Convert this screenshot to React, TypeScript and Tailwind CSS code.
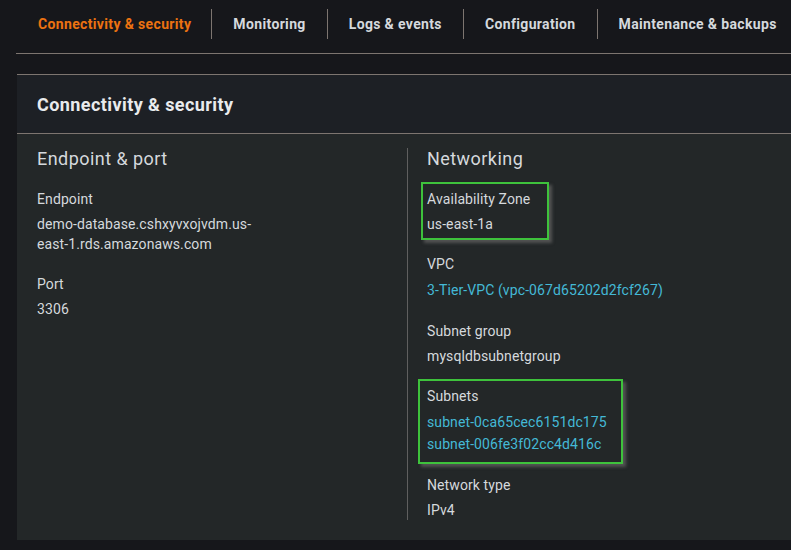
const tabs = ["Connectivity & security", "Monitoring", "Logs & events", "Configuration", "Maintenance & backups"];

function Label({ children }: { children: React.ReactNode }) {
  return <div className="text-[14px] leading-[20px] tracking-[0.1px] text-[#d5d9dd]">{children}</div>;
}

function Value({ children }: { children: React.ReactNode }) {
  return <div className="mt-[5px] text-[14px] leading-[20px] tracking-[0.1px] text-[#d5d9dd]">{children}</div>;
}

function Link({ children }: { children: React.ReactNode }) {
  return <div className="text-[14px] leading-[22px] tracking-[0.1px] text-[#44b9d6]">{children}</div>;
}

function Highlight({ className }: { className: string }) {
  return (
    <div
      className={`absolute border-2 border-[#3ec23c] shadow-[3px_3px_3px_rgba(90,90,90,0.85)] pointer-events-none ${className}`}
    />
  );
}

export default function App() {
  return (
    <div
      className="w-[791px] h-[550px] overflow-hidden bg-[#16171b]"
      style={{ fontFamily: "Roboto, 'Open Sans', sans-serif" }}
    >
      {/* tabs */}
      <div className="ml-[16px] h-[54px] border-b border-[#7d7570] flex items-start pt-[9px] pl-[22px]">
        {tabs.map((t, i) => (
          <div
            key={t}
            className={`h-[30px] flex items-center text-[14px] font-bold tracking-[0.35px] whitespace-nowrap ${
              i === 0 ? "pr-[20px] text-[#ec7211]" : "px-[21px] border-l border-[#7d7570] text-[#d5d9dd]"
            }`}
          >
            {t}
          </div>
        ))}
      </div>

      {/* panel */}
      <div className="ml-[17px] mt-[20px] border-t border-[#7d7570] bg-[#232728]">
        <div className="h-[59px] bg-[#1d2025] border-b border-[#7d7570] px-[20px] flex items-center">
          <h2 className="text-[18px] font-bold tracking-[0.42px] text-[#e9ebed]">Connectivity &amp; security</h2>
        </div>

        <div className="flex pt-[14px] pb-[20px]">
          {/* endpoint & port */}
          <div className="w-[390px] px-[20px] flex flex-col gap-[20px]">
            <h3 className="text-[18px] leading-[22px] tracking-[0.45px] -mb-[1px] text-[#d5d9dd]">Endpoint &amp; port</h3>
            <div>
              <Label>Endpoint</Label>
              <Value>
                demo-database.cshxyvxojvdm.us-
                <br />
                east-1.rds.amazonaws.com
              </Value>
            </div>
            <div>
              <Label>Port</Label>
              <Value>3306</Value>
            </div>
          </div>

          {/* networking */}
          <div className="flex-1 border-l border-[#5f5f5f] pl-[19px] pr-[20px] flex flex-col gap-[20px]">
            <h3 className="text-[18px] leading-[22px] tracking-[0.45px] -mb-[1px] text-[#d5d9dd]">Networking</h3>
            <div className="relative">
              <Label>Availability Zone</Label>
              <Value>us-east-1a</Value>
              <Highlight className="-left-[6px] -top-[7px] w-[128px] h-[58px]" />
            </div>
            <div>
              <Label>VPC</Label>
              <div className="mt-[5px]">
                <Link>3-Tier-VPC (vpc-067d65202d2fcf267)</Link>
              </div>
            </div>
            <div>
              <Label>Subnet group</Label>
              <Value>mysqldbsubnetgroup</Value>
            </div>
            <div className="relative">
              <Label>Subnets</Label>
              <div className="mt-[5px]">
                <Link>subnet-0ca65cec6151dc175</Link>
                <Link>subnet-006fe3f02cc4d416c</Link>
              </div>
              <Highlight className="-left-[9px] -top-[7px] w-[205px] h-[85px]" />
            </div>
            <div>
              <Label>Network type</Label>
              <Value>IPv4</Value>
            </div>
          </div>
        </div>
      </div>
    </div>
  );
}
